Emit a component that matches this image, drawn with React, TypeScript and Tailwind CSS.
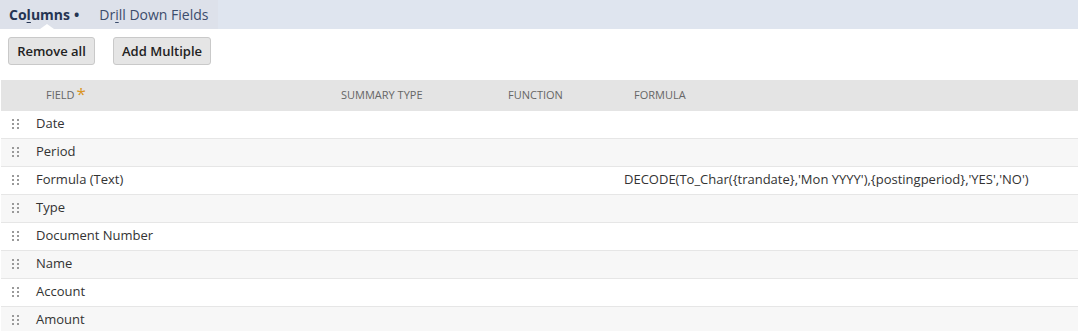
import React from 'react';

const rows = [
  { field: 'Date', formula: '' },
  { field: 'Period', formula: '' },
  { field: 'Formula (Text)', formula: "DECODE(To_Char({trandate},'Mon YYYY'),{postingperiod},'YES','NO')" },
  { field: 'Type', formula: '' },
  { field: 'Document Number', formula: '' },
  { field: 'Name', formula: '' },
  { field: 'Account', formula: '' },
  { field: 'Amount', formula: '' },
];

// 2x3 dot drag handle
const Grip = () => (
  <svg width="7" height="11" viewBox="0 0 7 11" className="shrink-0">
    {[0, 4, 8].map((y) => (
      <g key={y} fill="#9a9a9a">
        <rect x="0" y={y} width="2" height="2" />
        <rect x="5" y={y} width="2" height="2" />
      </g>
    ))}
  </svg>
);

export default function App() {
  return (
    <div className="w-[1078px] h-[331px] overflow-hidden bg-white font-['Open_Sans',sans-serif] text-[13px] text-[#333]">
      {/* tabs */}
      <div className="flex h-[29px] bg-[#dfe5ef]">
        <div className="flex bg-[#dde1ea]">
          <div className="relative flex items-center pl-[9px] pr-[20px] text-[14px] font-bold text-[#253553]">
            <span>
              Co<span className="underline underline-offset-2">l</span>umns
            </span>
            <span className="ml-[4px] text-[14px]">•</span>
            <div className="absolute left-[40px] bottom-0 h-0 w-0 border-x-[7px] border-b-[5px] border-x-transparent border-b-white" />
          </div>
          <div className="flex items-center pr-[10px] text-[14px] text-[#3b4c6c]">
            Dr<span className="underline underline-offset-2">i</span>ll Down Fields
          </div>
        </div>
      </div>

      {/* actions */}
      <div className="flex gap-[18px] pl-[8px] pt-[8px] pb-[15px]">
        <button className="h-[28px] w-[87px] rounded-[3px] border border-[#c9c9c9] bg-[#e5e5e5] pt-[1px] text-[13px] font-semibold text-[#222]">
          Remove all
        </button>
        <button className="h-[28px] w-[98px] rounded-[3px] border border-[#c9c9c9] bg-[#e5e5e5] pt-[1px] text-[13px] font-semibold text-[#222]">
          Add Multiple
        </button>
      </div>

      {/* table */}
      <div className="ml-[1px]">
        <div className="flex h-[31px] items-center bg-[#e4e4e4] text-[11px] uppercase text-[#666]">
          <div className="w-[340px] pl-[45px]">
            Field<span className="relative -top-[2px] ml-[2px] align-top text-[17px] leading-none text-[#d9951f]">*</span>
          </div>
          <div className="w-[167px]">Summary Type</div>
          <div className="w-[126px]">Function</div>
          <div>Formula</div>
        </div>
        {rows.map((r, i) => (
          <div
            key={r.field}
            className={`flex h-[28px] items-center border-b border-[#e6e6e6] pb-[1px] ${i % 2 ? 'bg-[#f7f7f7]' : 'bg-white'}`}
          >
            <div className="w-[35px] pl-[11px]">
              <Grip />
            </div>
            <div className="w-[588px]">{r.field}</div>
            <div>{r.formula}</div>
          </div>
        ))}
      </div>
    </div>
  );
}
